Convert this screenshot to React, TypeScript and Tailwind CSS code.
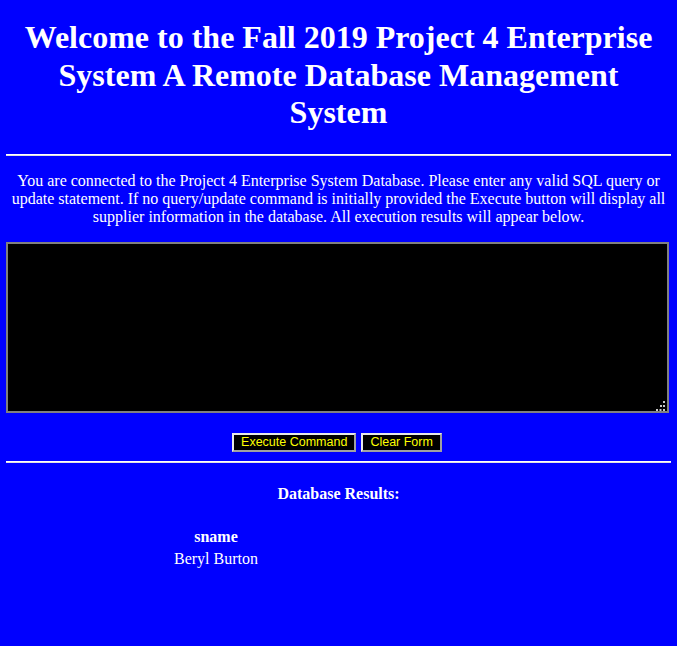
import React from "react";

export default function App() {
  return (
    <div className="min-h-[646px] w-full bg-[#0000ff] px-[6px] pt-[19px] text-white" style={{ fontFamily: '"Liberation Serif", "Times New Roman", serif' }}>
      <h1 className="text-center text-[32px] font-bold leading-[37.7px] text-white">
        Welcome to the Fall 2019 Project 4 Enterprise System A Remote Database Management System
      </h1>
      <div className="mt-[22px] h-[2px] border-t border-white bg-[#e0e0e0]" />
      <p className="mt-[16px] px-[2px] text-center text-[16px] leading-[18px]">
        You are connected to the Project 4 Enterprise System Database. Please enter any valid SQL query or update statement. If no query/update command is initially provided the Execute button will display all supplier information in the database. All execution results will appear below.
      </p>
      <div className="relative mt-[16px] h-[171px] w-[663px]">
        <textarea className="block h-[171px] w-[663px] resize-none border-2 border-[#808080] bg-black text-white outline-none" />
        <svg className="absolute bottom-[2px] right-[4px]" width="10" height="10" viewBox="0 0 10 10">
          <rect x="8" y="0" width="2" height="2" fill="#c8c8c8" />
          <rect x="5" y="4" width="2" height="2" fill="#c8c8c8" />
          <rect x="8" y="4" width="2" height="2" fill="#c8c8c8" />
          <rect x="1" y="8" width="2" height="2" fill="#c8c8c8" />
          <rect x="4.5" y="8" width="2" height="2" fill="#c8c8c8" />
          <rect x="8" y="8" width="2" height="2" fill="#c8c8c8" />
        </svg>
      </div>
      <div className="mt-[20px] flex justify-center gap-[5px] pr-[3px]" style={{ fontFamily: '"Liberation Sans", Arial, sans-serif' }}>
        <button className="h-[19px] border-2 border-t-[#e8e8e8] border-l-[#e8e8e8] border-r-[#a0a0a0] border-b-[#a0a0a0] bg-black px-[7px] text-[12.5px] leading-[13px] text-[#ffff00]">
          Execute Command
        </button>
        <button className="h-[19px] border-2 border-t-[#e8e8e8] border-l-[#e8e8e8] border-r-[#a0a0a0] border-b-[#a0a0a0] bg-black px-[7px] text-[12.5px] leading-[13px] text-[#ffff00]">
          Clear Form
        </button>
      </div>
      <div className="mt-[9px] h-[2px] border-t border-white bg-[#e0e0e0]" />
      <div className="mt-[22px] text-center text-[16px] font-bold leading-[18px]">Database Results:</div>
      <div className="mt-[25px] ml-[166px] flex w-[88px] flex-col items-center text-[16px] leading-[18px]">
        <div className="font-bold">sname</div>
        <div className="mt-[4px]">Beryl Burton</div>
      </div>
    </div>
  );
}
